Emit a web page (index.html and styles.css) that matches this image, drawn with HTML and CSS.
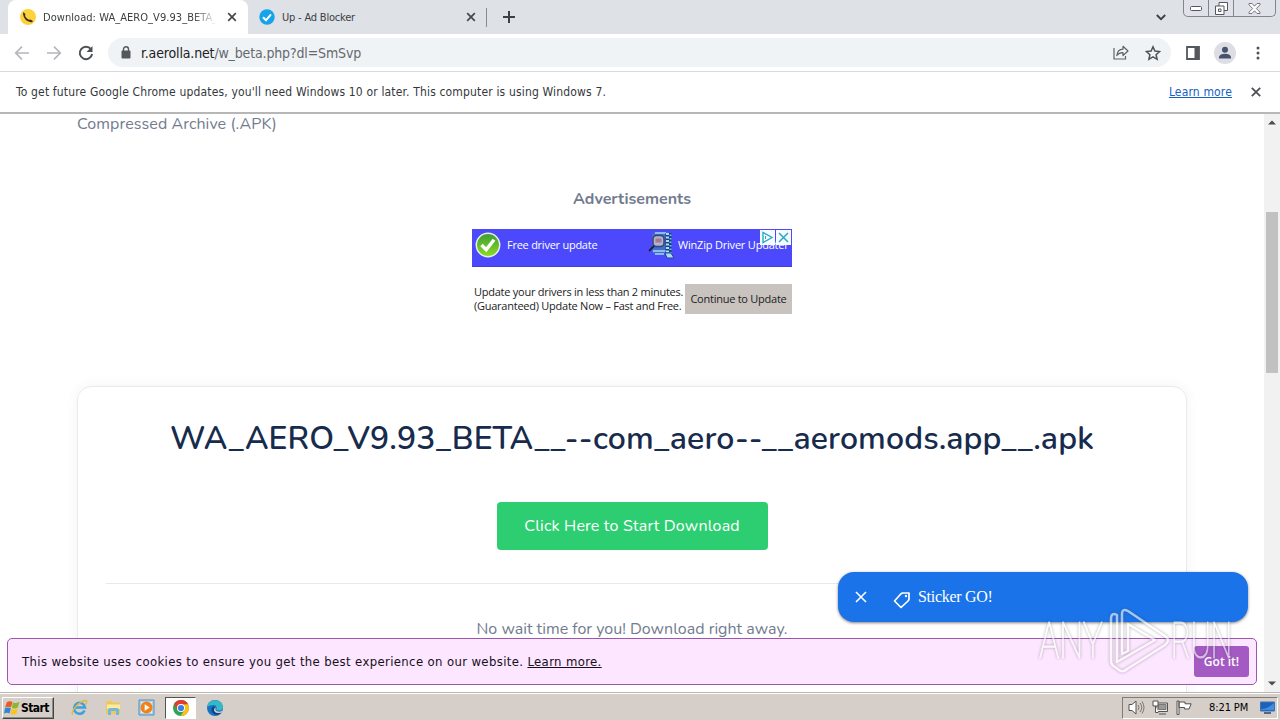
FILE: index.html
```html
<!DOCTYPE html>
<html lang="en">
<head>
  <meta charset="UTF-8">
  <meta name="viewport" content="width=device-width, initial-scale=1.0">
  <title>Download: WA_AERO_V9.93_BETA</title>
  <link rel="stylesheet" href="styles.css">
</head>
<body>
  <div class="desktop">
    <!-- Tab strip -->
    <div class="tabs">
      <div class="tab active">
        <svg width="16" height="16" viewBox="0 0 16 16"><circle cx="8" cy="8" r="8" fill="#fdd23c"/><path d="M3.800 3.200 5.500 5.500 5 7Q6.300 9.700 8.800 10.800l1.500-.4 2.600 1.500Q12.500 13.500 11 13.300 4 12 3 5 3 3.500 3.800 3.200Z" fill="#3b2a20"/></svg>
        <span class="tab-title fade">Download: WA_AERO_V9.93_BETA_</span>
        <svg class="tab-x" width="10" height="10" viewBox="0 0 10 10"><path d="M1.200 1.200l7.600 7.600M8.800 1.200L1.200 8.800" stroke="#45494d" stroke-width="1.700"/></svg>
      </div>
      <div class="tab inactive">
        <svg width="16" height="16" viewBox="0 0 16 16"><circle cx="8" cy="8" r="7.700" fill="#15a3ea"/><path d="M4 8.200l3 3 5-5.800" fill="none" stroke="#fff" stroke-width="2"/></svg>
        <span class="tab-title second">Up - Ad Blocker</span>
        <svg class="tab-x" width="10" height="10" viewBox="0 0 10 10"><path d="M1.200 1.200l7.600 7.600M8.800 1.200L1.200 8.800" stroke="#45494d" stroke-width="1.700"/></svg>
      </div>
      <div class="tab-line"></div>
      <svg class="plus" width="12" height="12" viewBox="0 0 12 12"><path d="M6 0v12M0 6h12" stroke="#3c4043" stroke-width="2"/></svg>
      <svg class="chevron" width="10" height="7" viewBox="0 0 10 7"><path d="M.8 1l4.200 4.200L9.200 1" fill="none" stroke="#3c4043" stroke-width="1.800"/></svg>
      <div class="win-buttons">
        <span><svg width="12" height="5" viewBox="0 0 12 5"><rect x=".5" y=".5" width="11" height="4" rx="1" fill="#fff" stroke="#53565f"/></svg></span>
        <span><svg width="13" height="13" viewBox="0 0 13 13"><path d="M4 .5h8.500v8H4z" fill="#fff" stroke="#53565f"/><path d="M.5 4h8.500v8.500H.5zM3.500 7h2.500v2.500H3.500z" fill="#fff" stroke="#53565f"/></svg></span>
        <span><svg width="13" height="11" viewBox="0 0 13 11"><path d="M1 .5h3l2.500 2.700L9 .5h3v1.300L8.300 5.500 12 9.200v1.300H9L6.500 7.800 4 10.500H1V9.200l3.700-3.700L1 1.800z" fill="#fff" stroke="#666975" stroke-width=".9"/></svg></span>
      </div>
    </div>
    <!-- Toolbar -->
    <div class="toolbar">
      <svg class="nav" width="16" height="16" viewBox="0 0 16 16"><path d="M15 8H2M8 1.700L1.700 8 8 14.300" fill="none" stroke="#b5b7ba" stroke-width="1.700"/></svg>
      <svg class="nav" width="16" height="16" viewBox="0 0 16 16"><path d="M1 8h13M8 1.700L14.300 8 8 14.300" fill="none" stroke="#b5b7ba" stroke-width="1.700"/></svg>
      <svg class="nav" width="16" height="16" viewBox="0 0 16 16"><path d="M13 4.300A6.200 6.200 0 1 0 14.100 9" fill="none" stroke="#4e5256" stroke-width="2"/><path d="M14.500 1v6H8.500z" fill="#4e5256"/></svg>
      <div class="omnibox">
        <svg width="10" height="13" viewBox="0 0 10 13"><rect x=".5" y="4.500" width="9" height="8" rx="1" fill="#54585c"/><path d="M2.500 5V3.300a2.500 2.500 0 0 1 5 0V5" fill="none" stroke="#54585c" stroke-width="1.400"/></svg>
        <span class="url"><b>r.aerolla.net</b>/w_beta.php?dl=SmSvp</span>
        <svg class="share" width="16" height="15" viewBox="0 0 16 15"><path d="M1 3v11h11.500v-3" fill="none" stroke="#5f6368" stroke-width="1.200"/><path d="M3.800 10.500Q4.500 4.500 10 4.200V1.300L15 6l-5 4.500V7.600Q6 7.500 3.800 10.500Z" fill="none" stroke="#5f6368" stroke-width="1.200" stroke-linejoin="round"/></svg>
        <svg width="16" height="16" viewBox="0 0 16 16"><path d="M8 1.800l1.900 4.300 4.700.5-3.500 3.100 1 4.600L8 11.900l-4.100 2.400 1-4.600L1.400 6.600l4.700-.5z" fill="none" stroke="#4e5256" stroke-width="1.500"/></svg>
      </div>
      <svg class="panel" width="14" height="14" viewBox="0 0 14 14"><path d="M1 1h12v12H1z" fill="#fff" stroke="#54585c" stroke-width="1.800"/><path d="M8.500 1H13v12H8.500z" fill="#54585c"/></svg>
      <svg class="avatar" width="22" height="22" viewBox="0 0 22 22"><circle cx="11" cy="11" r="11" fill="#dcdee3"/><circle cx="11" cy="7.700" r="3" fill="#46536e"/><path d="M5 16.500v-1.800q1-3 6-3t6 3v1.800z" fill="#46536e"/></svg>
      <svg width="4" height="14" viewBox="0 0 4 14"><g fill="#4e5256"><circle cx="2" cy="2" r="1.500"/><circle cx="2" cy="7" r="1.500"/><circle cx="2" cy="12" r="1.500"/></g></svg>
    </div>
    <div class="infobar">
      <span class="info-text">To get future Google Chrome updates, you'll need Windows 10 or later. This computer is using Windows 7.</span>
      <a class="info-link">Learn more</a>
      <svg width="10" height="10" viewBox="0 0 10 10"><path d="M.8.8l8.400 8.400M9.200.8L.8 9.200" stroke="#4e5256" stroke-width="1.800"/></svg>
    </div>
    <!-- Page -->
    <div class="viewport">
      <main class="page">
        <p class="filetype">Compressed Archive (.APK)</p>
        <h4>Advertisements</h4>
        <div class="ad">
          <div class="ad-head">
            <svg width="26" height="26" viewBox="0 0 26 26"><defs><linearGradient id="tick" x1="0" y1="0" x2="0" y2="1"><stop offset="0" stop-color="#3a9c35"/><stop offset="1" stop-color="#8fdc22"/></linearGradient></defs><circle cx="13" cy="13" r="11.700" fill="url(#tick)" stroke="#e6efe4" stroke-width="1.500"/><path d="M6.500 13l4.700 4.700L19 7.800" fill="none" stroke="#fff" stroke-width="3.400"/></svg>
            <span class="ad-free">Free driver update</span>
            <svg class="winzip" width="28" height="28" viewBox="0 0 28 28"><path d="M4 2l3-2h12l4 2v18l-2 2H6l-2-2z" fill="#3f6fd0"/><path d="M7 1h11M5 19h13M7 22h9" stroke="#a7d5f8" stroke-width="1.500"/><path d="M20.500 1v22" stroke="#1d3f8a" stroke-width="6"/><path d="M19.500 1v22" stroke="#a9e0ef" stroke-width="3" stroke-dasharray="2 1.500"/><path d="M22.500 2.500v20" stroke="#6fc4e4" stroke-width="2" stroke-dasharray="1.500 2"/><rect x="5" y="3.500" width="11" height="11" rx="3.500" fill="#a9b5d2" stroke="#43416c" stroke-width="1.500"/><path d="M7.500 6.500h6v4h-6z" fill="#a8788c"/><path d="M6 14l-5 5" stroke="#202044" stroke-width="2"/><path d="M17 21h6l3 5h-7z" fill="#a6dcf2" stroke="#26419d"/></svg>
            <span class="ad-brand">WinZip Driver Updater</span>
            <div class="ad-choice">
              <svg width="15" height="15" viewBox="0 0 15 15"><path d="M3 2.500v10l9-5z" fill="none" stroke="#29a9c7" stroke-width="1.400"/><path d="M5.500 6v3" stroke="#29a9c7"/></svg>
              <svg width="15" height="15" viewBox="0 0 15 15"><path d="M3 3l9 9M12 3l-9 9" stroke="#29a9c7" stroke-width="1.500"/></svg>
            </div>
          </div>
          <div class="ad-body">
            <div class="ad-copy">Update your drivers in less than 2 minutes.<br>(Guaranteed) Update Now – Fast and Free.</div>
            <div class="ad-cta">Continue to Update</div>
          </div>
        </div>
        <section class="card">
          <h1>WA_AERO_V9.93_BETA__--com_aero--__aeromods.app__.apk</h1>
          <a class="download">Click Here to Start Download</a>
          <hr>
          <p class="wait">No wait time for you! Download right away.</p>
        </section>
      </main>
      <div class="scrollbar">
        <svg width="8" height="5" viewBox="0 0 8 5"><path d="M0 4.500L4 .5l4 4z" fill="#4c4c4c"/></svg>
        <div class="track"><div class="thumb"></div></div>
        <svg width="8" height="5" viewBox="0 0 8 5"><path d="M0 .5l4 4 4-4z" fill="#4c4c4c"/></svg>
      </div>
      <div class="cookies">
        <span class="cookie-text">This website uses cookies to ensure you get the best experience on our website. <u>Learn more.</u></span>
        <span class="got-it">Got it!</span>
      </div>
      <div class="sticker">
        <svg width="12" height="12" viewBox="0 0 12 12"><path d="M1 1l10 10M11 1L1 11" stroke="#fff" stroke-width="1.600"/></svg>
        <svg class="tag" width="18" height="18" viewBox="0 0 18 18"><path d="M1.500 10L8 2.800 9.500 2H16v6.500L15 10l-7 6.500z" fill="none" stroke="#fff" stroke-width="1.700" stroke-linejoin="round"/><circle cx="13" cy="5" r="1.200" fill="#fff"/></svg>
        <span>Sticker GO!</span>
      </div>
    </div>
    <!-- Taskbar -->
    <div class="taskbar">
      <div class="start">
        <svg width="16" height="16" viewBox="0 0 16 16"><path d="M3 2Q6 .5 8.500 2L7 7.300Q4 6 1 7.500z" fill="#e85b24"/><path d="M9 2.500q3 1.500 6.500-.8L13.800 7.500q-3 1.700-6 .2z" fill="#8cb62c"/><path d="M1 8.200q3-1.500 5.900 0L5.500 13.500Q3 12 0 13.500z" fill="#2d89d6"/><path d="M7.600 8.700q3 1.500 6-.2l-1.200 5.200q-3 1.700-6 .2z" fill="#fbc322"/></svg>
        <span>Start</span>
      </div>
      <svg class="ie" width="17" height="17" viewBox="0 0 17 17"><path d="M13.600 11.500A5.500 5.500 0 1 1 14 8.500H4" fill="none" stroke="#3ba1df" stroke-width="2.500"/><path d="M2 15.500Q-.5 14 4.500 8T15 1.500q2 1-.5 4" fill="none" stroke="#e7b53b" stroke-width="1.300"/></svg>
      <svg class="folder" width="17" height="16" viewBox="0 0 17 16"><path d="M1 2l1-1h5l1 1.500h7V14H1z" fill="#edc95c"/><path d="M2 4.500h13V9H2z" fill="#fbeaa2"/><path d="M3 15V9.500q0-1.500 2-1.500h7q2 0 2 1.500V15h-3v-4H6v4z" fill="#75b8dc"/></svg>
      <svg class="media" width="17" height="17" viewBox="0 0 17 17"><path d="M1 1h15v15H1z" fill="#acd2eb" stroke="#4e91c3"/><path d="M3 3h11v11H3z" fill="#e4f0f7"/><circle cx="8.500" cy="8.500" r="6" fill="#f28218"/><path d="M6.700 5.200v6.600l5-3.300z" fill="#fff"/></svg>
      <div class="task-active">
        <svg width="16" height="16" viewBox="0 0 16 16"><circle cx="8" cy="8" r="8" fill="#34a153"/><path d="M1.100 4A8 8 0 0 1 15 4.200L8 5 4.700 10z" fill="#e33b2e"/><path d="M15 4.200A8 8 0 0 1 7.500 16L11.500 10 10 4.500z" fill="#fbc116"/><circle cx="8" cy="8" r="4" fill="#fff"/><circle cx="8" cy="8" r="3.100" fill="#397fe8"/></svg>
      </div>
      <svg class="edge" width="16" height="16" viewBox="0 0 16 16"><circle cx="8" cy="8" r="8" fill="#1473c4"/><path d="M.2 7Q1 1 7 .2q7-.5 9 6.300.2 4-4.500 4-3 0-2-2Q10 5 6.500 5 2.500 5 .2 7z" fill="#35b9c5"/><path d="M5.500 7Q3 11 7 14q4 2 7.500-1.500Q10 14 7.800 11 6.200 8.500 8 6.500z" fill="#123f82"/><path d="M9 7.500q-2 3 2 4 3 .5 4.500-1l-1 2q-5 1.500-7-1-1.500-3 1.500-4z" fill="#d6ccc5"/></svg>
      <div class="tray">
        <svg width="17" height="15" viewBox="0 0 17 15"><path d="M1 4.500h3L8 1v13l-4-3.500H1z" fill="#fff" stroke="#55534f"/><path d="M10 5q2 2.500 0 5M12 3q3.500 4.500 0 9M14 1.500q4 6 0 12" fill="none" stroke="#77736d"/></svg>
        <svg class="net" width="16" height="15" viewBox="0 0 16 15"><path d="M5 3h10.500v8.500H5z" fill="#eee" stroke="#55534f"/><path d="M6.500 4.500h7.500v5H6.500z" fill="#999" stroke="#777"/><path d="M1 1h5v5H1zM3.500 6v6.500h3M7 14h7" fill="#fff" stroke="#55534f"/></svg>
        <svg class="flag" width="16" height="15" viewBox="0 0 16 15"><path d="M1 1h2v13.500H1zM3 2h6v1.800h6.200L13 9H8.500V7.500H3z" fill="#fff" stroke="#55534f"/></svg>
        <span>8:21 PM</span>
        <svg width="15" height="13" viewBox="0 0 15 13"><path d="M.5 1h14v9H.5z" fill="#1e61bb" stroke="#3f72b0"/><path d="M1 8Q8 8 14 2v7H1z" fill="#3c8fe0"/><path d="M4 12h7" stroke="#53697e" stroke-width="2"/></svg>
      </div>
    </div>
    <!-- Watermark -->
    <svg class="watermark" width="200" height="70" viewBox="0 0 200 70">
      <text x="3" y="51" textLength="64" lengthAdjust="spacingAndGlyphs">ANY</text>
      <path d="M81 8q-6-3-6 4v42q0 4 4 6l4 3q4 3 8-1l38-24q6-5 0-9L92 4q-6-3-6 3v40l6-3V17l27 16-38 22z"/>
      <text x="135" y="51" textLength="61" lengthAdjust="spacingAndGlyphs">RUN</text>
    </svg>
  </div>
</body>
</html>
```
FILE: styles.css
```css
* { box-sizing: border-box; }
body { margin: 0; font-family: "DejaVu Sans Condensed", "DejaVu Sans", sans-serif; }
svg { display: block; flex: none; }
p, h1, h4 { margin: 0; }
.desktop { position: relative; width: 1280px; height: 720px; overflow: hidden; display: flex; flex-direction: column; background: #fff; white-space: nowrap; }

.tabs { height: 34px; background: #dee1e6; display: flex; align-items: center; padding-left: 8px; flex: none; }
.tab { height: 34px; width: 239px; display: flex; align-items: center; padding: 0 11px 0 12px; font-size: 11px; color: #3c4043; }
.tab.active { width: 240px; background: #fff; border-radius: 8px 8px 0 0; }
.tab.inactive { padding-left: 11px; }
.tab-title { margin-left: 7px; width: 174px; overflow: hidden; letter-spacing: .05px; }
.tab-title.second { letter-spacing: -.2px; }
.tab-title.fade { -webkit-mask-image: linear-gradient(90deg, #000 86%, transparent); mask-image: linear-gradient(90deg, #000 86%, transparent); }
.tab-x { margin-left: auto; }
.tab-line { width: 1px; height: 19px; background: #888c91; margin-left: -1px; }
.plus { margin-left: 16px; }
.chevron { margin-left: auto; }
.win-buttons { display: flex; width: 93px; height: 17px; align-self: flex-start; margin: 0 4px 0 17px; border: 1px solid #81858e; border-top: 0; border-radius: 0 0 5px 5px; background: #dfe2e9; }
.win-buttons span { display: flex; align-items: center; justify-content: center; width: 25px; border-right: 1px solid #81858e; }
.win-buttons span:last-child { flex: 1; border: 0; }

.toolbar { height: 38px; display: flex; align-items: center; padding: 0 20px 0 14px; border-bottom: 1px solid #d7d9dc; flex: none; }
.nav { margin-right: 16px; }
.omnibox { width: 1064px; height: 29px; margin-left: -2px; border-radius: 15px; background: #f0f3f5; display: flex; align-items: center; padding: 0 10px 0 13px; }
.url { margin-left: 10px; font-size: 14px; color: #65696e; letter-spacing: -.15px; }
.url b { font-weight: 400; color: #202124; }
.share { margin-left: auto; margin-right: 16px; }
.panel { margin-left: 15px; }
.avatar { margin: 0 20px 0 14px; }

.infobar { height: 42px; flex: none; display: flex; align-items: center; padding: 0 19px 0 16px; font-size: 12px; color: #35383b; border-bottom: 2px solid #b7b7b7; letter-spacing: .16px; }
.info-link { margin-left: auto; margin-right: 19px; color: #1660c4; text-decoration: underline; }

.viewport { position: relative; height: 578px; display: flex; flex: none; overflow: hidden; }
.page { width: 1264px; padding: 0 77px; font-family: Nunito, "Open Sans", sans-serif; color: #727b8e; overflow: hidden; }
.filetype { height: 20px; line-height: 20px; font-size: 16px; letter-spacing: .08px; }
h4 { margin-top: 55px; height: 20px; line-height: 20px; font-size: 16px; text-align: center; }
.ad { width: 320px; height: 100px; margin: 20px auto 0; font-family: "Open Sans", sans-serif; color: #222; font-size: 11px; letter-spacing: -.25px; }
.ad-head { position: relative; height: 38px; background: #4b49fb; border-bottom: 1px solid #4240d8; color: #fff; display: flex; align-items: flex-start; padding: 3px 3px 0; }
.ad-free { margin: 5px 0 0 6px; width: 141px; }
.ad-brand { margin: 5px 0 0 2px; letter-spacing: -.2px; }
.ad-choice { position: absolute; top: 1px; right: 1px; display: flex; gap: 1px; }
.ad-choice svg { background: #f5fbff; }
.ad-body { display: flex; justify-content: space-between; align-items: center; margin-top: 17px; padding-left: 2px; line-height: 14px; }
.ad-cta { width: 107px; height: 30px; line-height: 30px; background: #c8c3bf; text-align: center; }
.card { width: 1110px; height: 330px; margin-top: 57px; border: 1px solid #e9eaee; border-radius: 14px; padding: 30px 28px; text-align: center; box-shadow: 0 0 14px rgba(20, 20, 40, .05); }
h1 { height: 44px; line-height: 44px; font-size: 32px; font-weight: 600; color: #172b4d; letter-spacing: .13px; }
.download { display: flex; width: 271px; height: 48px; align-items: center; justify-content: center; margin: 41px auto 0; background: #2dce71; border-radius: 4px; color: #fff; font-size: 16px; letter-spacing: .18px; }
hr { margin: 33px 0; border: 0; border-top: 1px solid #e6e8ec; }
.wait { height: 24px; line-height: 24px; font-size: 16px; }

.scrollbar { width: 16px; background: #f1f1f1; display: flex; flex-direction: column; align-items: center; padding: 6px 0 6px; }
.track { flex: 1; width: 12px; padding-top: 87px; }
.thumb { height: 161px; background: #c1c1c1; }

.cookies { position: absolute; left: 7px; top: 524px; width: 1250px; height: 47px; border: 1px solid #9a57ad; border-radius: 5px; background: #fde6ff; display: flex; align-items: center; justify-content: space-between; padding: 0 7px 0 14px; font-size: 13px; color: #17101c; }
.cookie-text { letter-spacing: .36px; }
.got-it { width: 55px; height: 31px; line-height: 31px; border-radius: 3px; background: #a45ac3; color: #fff; text-align: center; font-size: 12px; font-weight: 600; font-family: "Open Sans", sans-serif; }
.sticker { position: absolute; left: 838px; top: 458px; width: 410px; height: 50px; border-radius: 16px; background: #1a73e8; box-shadow: 0 1px 3px rgba(0, 0, 0, .5); display: flex; align-items: center; padding: 0 0 1px 17px; color: #fff; font-family: "Liberation Serif", serif; font-size: 16px; letter-spacing: -.3px; }
.tag { margin: 7px 7px 0 26px; }

.taskbar { height: 28px; background: #d6cec8; border-top: 1px solid #b9b4ad; box-shadow: inset 0 1px #fff; display: flex; align-items: center; padding: 3px 2px 1px; flex: none; }
.start { width: 52px; height: 22px; border: 1px solid; border-color: #fff #444 #444 #fff; box-shadow: inset -1px -1px #918b86; display: flex; align-items: center; padding-left: 1px; font-size: 12px; font-weight: 700; color: #000; }
.start span { margin-left: 1px; letter-spacing: -.6px; }
.ie, .folder, .media { margin-left: 17px; }
.folder, .media { margin-left: 16.5px; }
.task-active { width: 31px; height: 22px; margin-left: 10px; border: 1px solid; border-color: #55524f #fff #fff #55524f; background: #fff; display: flex; align-items: center; justify-content: center; }
.edge { margin-left: 11px; }
.tray { margin-left: auto; width: 156px; height: 22px; border: 1px solid; border-color: #807b76 #fff #fff #807b76; display: flex; align-items: center; padding: 0 2px 0 5px; font-size: 11px; color: #000; }
.net { margin-left: 7px; }
.flag { margin-left: 8px; }
.tray span { margin-left: 17px; margin-right: auto; letter-spacing: -.1px; }

.watermark { position: absolute; left: 1036px; top: 607px; fill: none; stroke: #fff; stroke-width: 2.5px; stroke-linejoin: round; opacity: .6; filter: drop-shadow(0 0 1.5px rgba(60, 60, 70, .7)); }
.watermark text { font: 100 50px Roboto, sans-serif; fill: #fff; stroke-width: 1px; }
```
